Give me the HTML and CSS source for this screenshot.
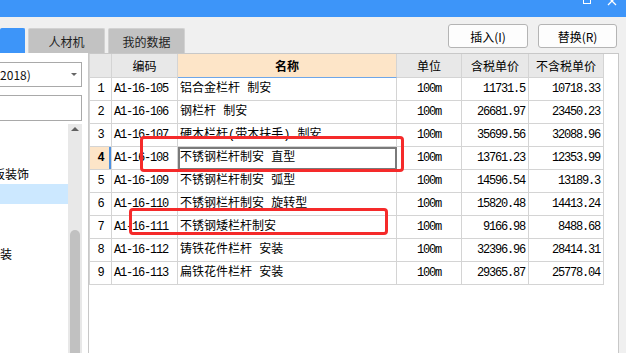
FILE: index.html
```html
<!DOCTYPE html>
<html lang="zh-CN">
<head>
<meta charset="utf-8">
<title>定额查询</title>
<link rel="stylesheet" href="styles.css">
</head>
<body>
<div class="titlebar">
  <svg class="win-ctrl" width="44" height="17" viewBox="0 0 44 17">
    <rect x="5.5" y="-6.5" width="7" height="10" fill="none" stroke="#fff" stroke-width="1"/>
    <path d="M30 5 L38 -3 M38 5 L30 -3" stroke="#fff" stroke-width="1.3" fill="none"/>
  </svg>
</div>
<div class="toolbar">
  <div class="tabs">
    <div class="tab tab-active"></div>
    <div class="tab">人材机</div>
    <div class="tab">我的数据</div>
  </div>
  <div class="actions">
    <button class="btn btn-insert">插入(I)</button>
    <button class="btn btn-replace">替换(R)</button>
  </div>
</div>
<div class="main">
  <aside class="side">
    <div class="select"><span class="select-text">(2018)</span><span class="caret"></span></div>
    <div class="search"></div>
    <div class="tree">
      <ul class="tree-list">
        <li class="tree-item"></li>
        <li class="tree-item"></li>
        <li class="tree-item"><span class="cut">板装饰</span></li>
        <li class="tree-item tree-selected"></li>
        <li class="tree-item"></li>
        <li class="tree-item"></li>
        <li class="tree-item"><span class="cut2">安装</span></li>
      </ul>
      <div class="scrollbar">
        <span class="arrow-up"></span>
        <span class="thumb"></span>
      </div>
    </div>
  </aside>
  <section class="grid">
    <table class="quota">
      <colgroup>
        <col class="c-rn"><col class="c-code"><col class="c-name"><col class="c-unit"><col class="c-tax"><col class="c-notax">
      </colgroup>
      <thead>
        <tr><th></th><th>编码</th><th class="th-sorted">名称</th><th>单位</th><th>含税单价</th><th>不含税单价</th></tr>
      </thead>
      <tbody>
        <tr><td class="rn">1</td><td class="code">A1-16-105</td><td class="name">铝合金栏杆 制安</td><td class="unit">100m</td><td class="num">11731.5</td><td class="num">10718.33</td></tr>
        <tr><td class="rn">2</td><td class="code">A1-16-106</td><td class="name">钢栏杆 制安</td><td class="unit">100m</td><td class="num">26681.97</td><td class="num">23450.23</td></tr>
        <tr><td class="rn">3</td><td class="code">A1-16-107</td><td class="name">硬木栏杆(带木扶手) 制安</td><td class="unit">100m</td><td class="num">35699.56</td><td class="num">32088.96</td></tr>
        <tr><td class="rn rn-cur">4</td><td class="code">A1-16-108</td><td class="name name-cur">不锈钢栏杆制安 直型</td><td class="unit">100m</td><td class="num">13761.23</td><td class="num">12353.99</td></tr>
        <tr><td class="rn">5</td><td class="code">A1-16-109</td><td class="name">不锈钢栏杆制安 弧型</td><td class="unit">100m</td><td class="num">14596.54</td><td class="num">13189.3</td></tr>
        <tr><td class="rn">6</td><td class="code">A1-16-110</td><td class="name">不锈钢栏杆制安 旋转型</td><td class="unit">100m</td><td class="num">15820.48</td><td class="num">14413.24</td></tr>
        <tr><td class="rn">7</td><td class="code">A1-16-111</td><td class="name">不锈钢矮栏杆制安</td><td class="unit">100m</td><td class="num">9166.98</td><td class="num">8488.68</td></tr>
        <tr><td class="rn">8</td><td class="code">A1-16-112</td><td class="name">铸铁花件栏杆 安装</td><td class="unit">100m</td><td class="num">32396.96</td><td class="num">28414.31</td></tr>
        <tr><td class="rn">9</td><td class="code">A1-16-113</td><td class="name">扁铁花件栏杆 安装</td><td class="unit">100m</td><td class="num">29365.87</td><td class="num">25778.04</td></tr>
      </tbody>
    </table>
  </section>
</div>
<div class="mark mark-1"></div>
<div class="mark mark-2"></div>
</body>
</html>
```
FILE: styles.css
```css
html, body {
  margin: 0;
  padding: 0;
}
body {
  width: 626px;
  height: 353px;
  overflow: hidden;
  position: relative;
  background: #f0f0f0;
  font-family: "Noto Sans CJK SC", "Liberation Sans", sans-serif;
  font-size: 12px;
  color: #000;
}

.titlebar {
  height: 17px;
  background: #3d95f9;
  display: flex;
  justify-content: flex-end;
  padding-right: 4px;
}
.win-ctrl {
  display: block;
}

.toolbar {
  height: 36px;
  display: flex;
  justify-content: space-between;
}
.tabs {
  display: flex;
  gap: 3px;
  align-self: flex-end;
}
.tab {
  width: 77px;
  height: 25px;
  box-sizing: border-box;
  background: #c2c2c2;
  border: 1px solid #d2d2d2;
  border-bottom: none;
  border-radius: 2px 2px 0 0;
  display: flex;
  align-items: center;
  justify-content: center;
  color: #1e1e1e;
}
.tab-active {
  width: 25px;
  background: #3d95f9;
  border-color: #3d95f9;
}
.actions {
  display: flex;
  gap: 10px;
  padding-top: 7px;
  padding-right: 9px;
}
.btn {
  width: 80px;
  height: 24px;
  padding: 0;
  background: #fdfdfd;
  border: 1px solid #b4b4b4;
  border-radius: 3px;
  font-family: "Noto Sans CJK SC", sans-serif;
  font-size: 12px;
  color: #000;
}
.btn-replace {
  width: 79px;
}

.main {
  display: flex;
  height: 300px;
}

.side {
  width: 88px;
  flex: none;
  background: #fff;
  overflow: hidden;
  display: flex;
  flex-direction: column;
  padding-top: 9px;
  box-sizing: border-box;
}
.select {
  width: 92px;
  height: 25px;
  margin-left: -10px;
  box-sizing: border-box;
  border: 1px solid #a9a9a9;
  display: flex;
  align-items: center;
  padding-left: 5px;
  white-space: nowrap;
}
.select-text {
  color: #111;
}
.caret {
  margin-left: auto;
  margin-right: 4px;
  width: 0;
  height: 0;
  border-left: 3px solid transparent;
  border-right: 3px solid transparent;
  border-top: 3px solid #666;
}
.search {
  width: 92px;
  height: 26px;
  margin-top: 8px;
  margin-left: -10px;
  box-sizing: border-box;
  border: 1px solid #a9a9a9;
}
.tree {
  flex: 1;
  display: flex;
  margin-top: 3px;
  min-height: 0;
}
.tree-list {
  width: 68px;
  margin: 0;
  padding: 0;
  list-style: none;
  overflow: hidden;
}
.tree-item {
  height: 20px;
  line-height: 20px;
  white-space: nowrap;
}
.tree-selected {
  background: #cce8ff;
}
.cut {
  display: inline-block;
  margin-left: -7px;
}
.cut2 {
  display: inline-block;
  margin-left: -12px;
}
.scrollbar {
  width: 14px;
  background: #e8e8e8;
  display: flex;
  flex-direction: column;
  align-items: center;
  overflow: hidden;
}
.arrow-up {
  margin-top: 3px;
  width: 0;
  height: 0;
  border-left: 4px solid transparent;
  border-right: 4px solid transparent;
  border-bottom: 4px solid #606060;
}
.thumb {
  margin-top: 99px;
  width: 10px;
  height: 140px;
  flex: none;
  background: #c1c1c1;
  border-radius: 5px 5px 0 0;
}

.grid {
  width: 531px;
  flex: none;
  box-sizing: border-box;
  border: 1px solid #c8c8c8;
  border-bottom: none;
  background: #fff;
}
.quota {
  border-collapse: separate;
  border-spacing: 0;
  table-layout: fixed;
  width: 515px;
  border-left: 1px solid #d4d4d4;
}
.c-rn { width: 22px; }
.c-code { width: 66px; }
.c-name { width: 219px; }
.c-unit { width: 65px; }
.c-tax { width: 67px; }
.c-notax { width: 75px; }

.quota th {
  padding: 0;
  height: 23px;
  line-height: 23px;
  font-weight: normal;
  font-size: 12px;
  background: #e8e8e8;
  border-right: 1px solid #d4d4d4;
  border-bottom: 1px solid #d4d4d4;
  text-align: center;
}
.quota .th-sorted {
  background: #fde5c8;
  font-weight: bold;
  border-bottom-color: #6ea6e8;
}
.quota td {
  padding: 0;
  height: 22px;
  line-height: 22px;
  border-right: 1px solid #d4d4d4;
  border-bottom: 1px solid #d4d4d4;
  white-space: nowrap;
  overflow: hidden;
}
.quota .rn,
.quota .code,
.quota .unit,
.quota .num {
  font-family: "Liberation Mono", monospace;
  font-size: 12px;
  letter-spacing: -1.2px;
}
.quota .rn {
  text-align: center;
}
.quota .rn-cur {
  background: #fde5c8;
  font-weight: bold;
  box-shadow: inset -2px 0 0 #4a90e2;
}
.quota .code {
  padding-left: 2px;
}
.quota .name {
  padding-left: 2px;
  font-family: "Liberation Mono", "Noto Sans CJK SC", monospace;
}
.quota .name-cur {
  outline: 2px solid #7a7a7a;
  outline-offset: -2px;
}
.quota .unit {
  text-align: center;
}
.quota .num {
  text-align: right;
  padding-right: 3px;
}

.mark {
  position: absolute;
  box-sizing: border-box;
  border: 3px solid #f52a2a;
  border-radius: 4px;
}
.mark-1 {
  left: 140px;
  top: 136px;
  width: 264px;
  height: 36px;
}
.mark-2 {
  left: 129px;
  top: 208px;
  width: 259px;
  height: 27px;
}
```
